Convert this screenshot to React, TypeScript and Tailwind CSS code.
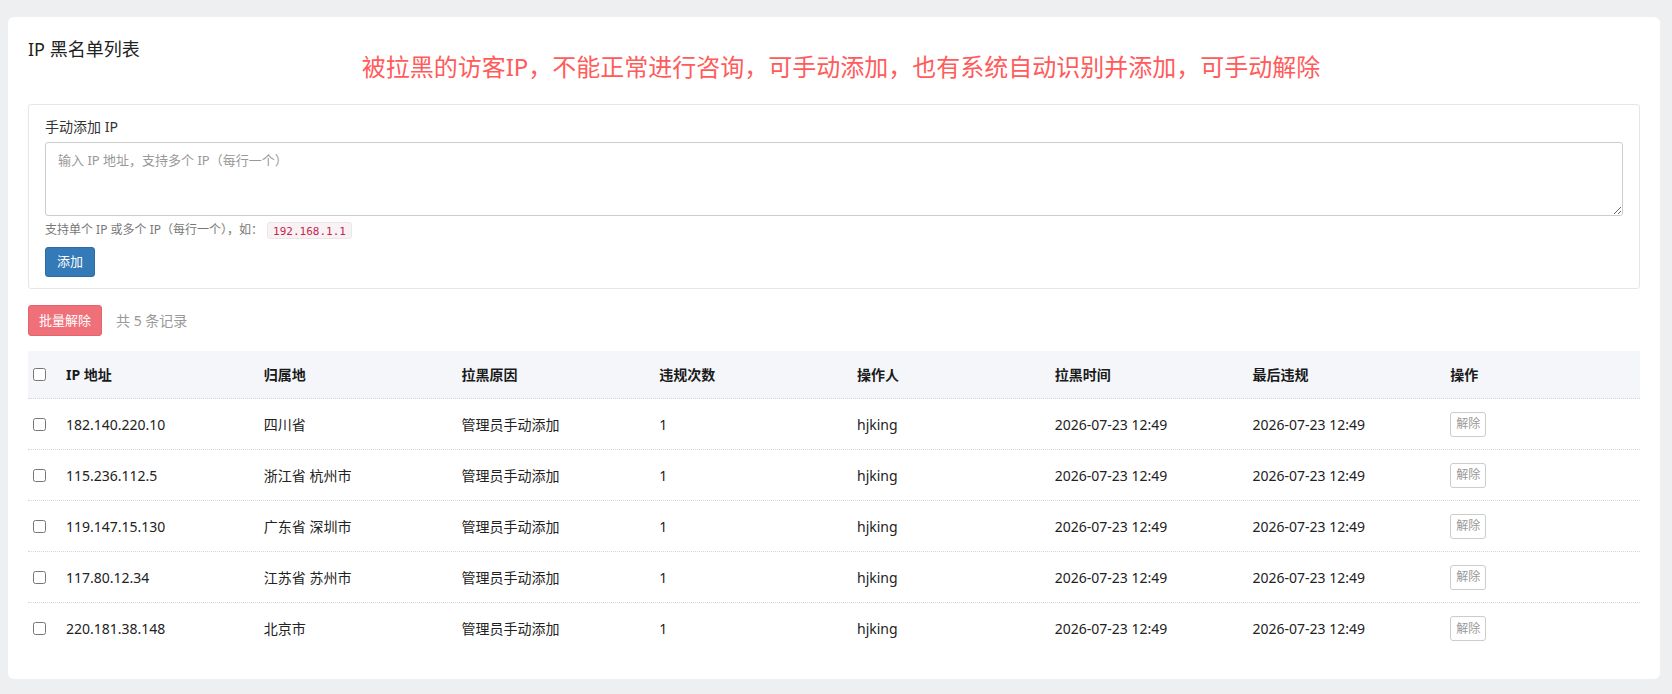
import React from "react";

type Row = {
  ip: string;
  region: string;
  reason: string;
  count: number;
  operator: string;
  blockedAt: string;
  lastAt: string;
};

const rows: Row[] = [
  { ip: "182.140.220.10", region: "四川省", reason: "管理员手动添加", count: 1, operator: "hjking", blockedAt: "2026-07-23 12:49", lastAt: "2026-07-23 12:49" },
  { ip: "115.236.112.5", region: "浙江省 杭州市", reason: "管理员手动添加", count: 1, operator: "hjking", blockedAt: "2026-07-23 12:49", lastAt: "2026-07-23 12:49" },
  { ip: "119.147.15.130", region: "广东省 深圳市", reason: "管理员手动添加", count: 1, operator: "hjking", blockedAt: "2026-07-23 12:49", lastAt: "2026-07-23 12:49" },
  { ip: "117.80.12.34", region: "江苏省 苏州市", reason: "管理员手动添加", count: 1, operator: "hjking", blockedAt: "2026-07-23 12:49", lastAt: "2026-07-23 12:49" },
  { ip: "220.181.38.148", region: "北京市", reason: "管理员手动添加", count: 1, operator: "hjking", blockedAt: "2026-07-23 12:49", lastAt: "2026-07-23 12:49" },
];

const headers = ["IP 地址", "归属地", "拉黑原因", "违规次数", "操作人", "拉黑时间", "最后违规", "操作"];

const gridCols = "grid grid-cols-[30px_repeat(8,minmax(0,1fr))] items-center";

const Checkbox = () => (
  <input type="checkbox" className="w-[13px] h-[13px] m-0 ml-[5px] block" />
);

export default function App() {
  return (
    <div
      className="min-h-screen bg-[#eeeff1] pt-[17px] pl-[8px] pr-[12px] pb-[16px] text-[14px] text-[#222]"
      style={{ fontFamily: '"Noto Sans", "Noto Sans CJK SC", sans-serif' }}
    >
      <div className="bg-white rounded-[6px] px-[20px] pt-[19px] pb-[25px]">
        {/* Header */}
        <h3 className="text-[18px] leading-[26px] text-[#222]">IP 黑名单列表</h3>
        <p className="-mt-[11px] pl-[14px] text-center text-[24px] leading-[32px] text-[#ff5b5b]">
          被拉黑的访客IP，不能正常进行咨询，可手动添加，也有系统自动识别并添加，可手动解除
        </p>

        {/* Manual add */}
        <div className="mt-[21px] border border-[#e6e6e6] rounded-[3px] px-[16px] pt-[12px] pb-[11px]">
          <label className="block leading-[20px] text-[#333] mb-[5px]">手动添加 IP</label>
          <textarea
            className="block w-full h-[74px] border border-[#ccc] rounded-[3px] px-[12px] pt-[7px] leading-[20px] text-[13px] placeholder:text-[#999] outline-none"
            placeholder="输入 IP 地址，支持多个 IP（每行一个）"
          />
          <div className="mt-[4px] flex items-center leading-[20px] text-[12px] text-[#777]">
            <span>支持单个 IP 或多个 IP（每行一个），如：</span>
            <code
              className="ml-[4px] px-[5px] h-[17px] leading-[17px] rounded-[3px] bg-[#f9f2f4] border border-[#ece6e8] text-[#c7254e] text-[11px]"
              style={{ fontFamily: '"DejaVu Sans Mono", "Liberation Mono", monospace' }}
            >
              192.168.1.1
            </code>
          </div>
          <button className="mt-[7px] h-[30px] px-[11px] rounded-[3px] bg-[#337ab7] border border-[#2e6da4] text-white text-[13px]">
            添加
          </button>
        </div>

        {/* Batch bar */}
        <div className="mt-[16px] flex items-center gap-[14px]">
          <button className="h-[31px] px-[10px] rounded-[3px] bg-[#f0707a] border border-[#e5636d] text-white text-[13px]">
            批量解除
          </button>
          <span className="text-[#999]">共 5 条记录</span>
        </div>

        {/* Table */}
        <div className="mt-[15px]">
          <div className={`${gridCols} h-[48px] bg-[#f5f6fa] border-b border-dotted border-[#d6d6d6] font-bold text-[#1a1a1a]`}>
            <Checkbox />
            {headers.map((h) => (
              <div key={h} className="pl-[8px]">{h}</div>
            ))}
          </div>
          {rows.map((r, i) => (
            <div
              key={r.ip}
              className={`${gridCols} h-[51px] ${i < rows.length - 1 ? "border-b border-dotted border-[#d6d6d6]" : ""}`}
            >
              <Checkbox />
              <div className="pl-[8px]">{r.ip}</div>
              <div className="pl-[8px]">{r.region}</div>
              <div className="pl-[8px]">{r.reason}</div>
              <div className="pl-[8px]">{r.count}</div>
              <div className="pl-[8px]">{r.operator}</div>
              <div className="pl-[8px]">{r.blockedAt}</div>
              <div className="pl-[8px]">{r.lastAt}</div>
              <div className="pl-[8px]">
                <button className="h-[25px] w-[36px] rounded-[3px] border border-[#ccc] bg-white text-[12px] text-[#999]">
                  解除
                </button>
              </div>
            </div>
          ))}
        </div>
      </div>
    </div>
  );
}
